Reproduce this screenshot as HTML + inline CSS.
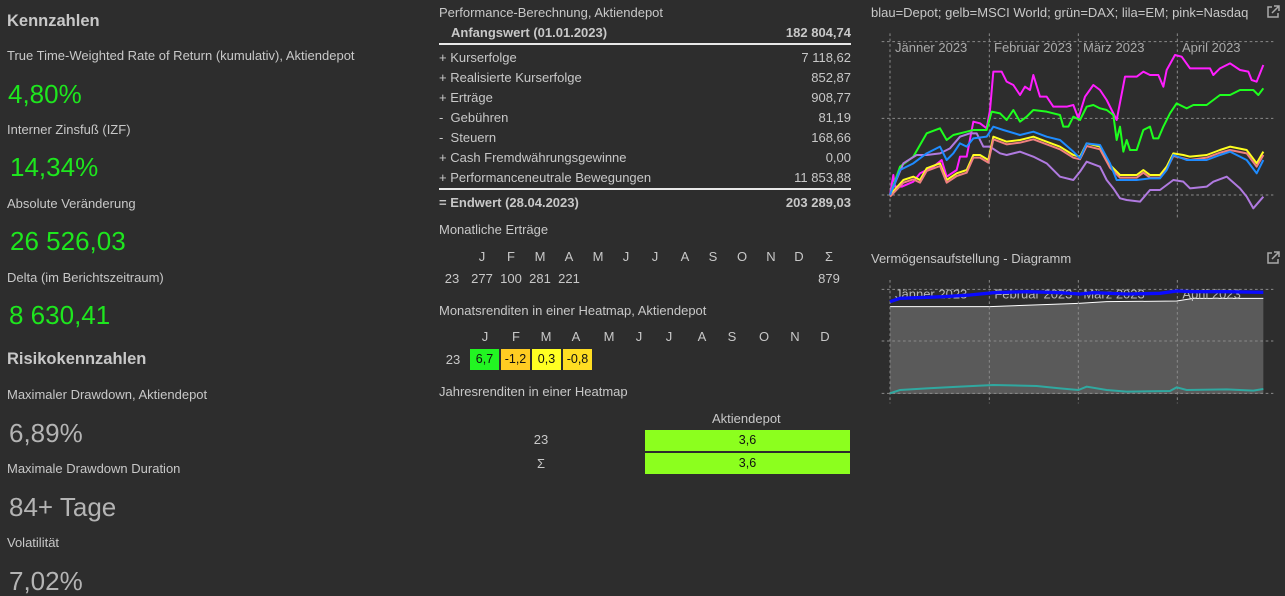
<!DOCTYPE html>
<html><head><meta charset="utf-8"><style>
body{margin:0;width:1285px;height:593px;background:#2d2d2d;overflow:hidden;position:relative;font-family:"Liberation Sans",sans-serif;color:#c8c8c8}
.a{position:absolute;white-space:nowrap;line-height:18px;font-size:13px}
.h{font-weight:bold;font-size:16.5px;line-height:20px;color:#c8c8c8}
.v{font-size:26px;line-height:30px}
.g{color:#1ee61e}
.gr{color:#b4b4b4}
.r{text-align:right}
.c{text-align:center;width:30px;margin-left:-15px}
.b{font-weight:bold}
.line{position:absolute;left:439px;width:412px;height:2px;background:#e8e8e8}
.cell{position:absolute;height:21px;line-height:21px;font-size:12.5px;color:#111;text-align:center}
.lbl{position:absolute;font-size:13px;color:#aaa;white-space:nowrap;line-height:16px}
</style></head><body>
<div class="a h" style="left:7px;top:11px">Kennzahlen</div>
<div class="a" style="left:7px;top:47px">True Time-Weighted Rate of Return (kumulativ), Aktiendepot</div>
<div class="a v g" style="left:8px;top:79px">4,80%</div>
<div class="a" style="left:7px;top:121px">Interner Zinsfuß (IZF)</div>
<div class="a v g" style="left:10px;top:152px">14,34%</div>
<div class="a" style="left:7px;top:195px">Absolute Veränderung</div>
<div class="a v g" style="left:10px;top:226px">26 526,03</div>
<div class="a" style="left:7px;top:269px">Delta (im Berichtszeitraum)</div>
<div class="a v g" style="left:9px;top:300px">8 630,41</div>
<div class="a h" style="left:7px;top:349px">Risikokennzahlen</div>
<div class="a" style="left:7px;top:386px">Maximaler Drawdown, Aktiendepot</div>
<div class="a v gr" style="left:9px;top:418px">6,89%</div>
<div class="a" style="left:7px;top:460px">Maximale Drawdown Duration</div>
<div class="a v gr" style="left:9px;top:492px">84+ Tage</div>
<div class="a" style="left:7px;top:534px">Volatilität</div>
<div class="a v gr" style="left:9px;top:566px">7,02%</div>

<div class="a" style="left:439px;top:4px">Performance-Berechnung, Aktiendepot</div>
<div class="a b" style="left:451px;top:24px">Anfangswert (01.01.2023)</div>
<div class="a b r" style="right:434px;top:24px">182 804,74</div>
<div class="line" style="top:43px"></div>
<div class="a" style="left:439px;top:49px">+ Kurserfolge</div><div class="a r" style="right:434px;top:49px">7 118,62</div>
<div class="a" style="left:439px;top:69px">+ Realisierte Kurserfolge</div><div class="a r" style="right:434px;top:69px">852,87</div>
<div class="a" style="left:439px;top:89px">+ Erträge</div><div class="a r" style="right:434px;top:89px">908,77</div>
<div class="a" style="left:439px;top:109px">-&nbsp; Gebühren</div><div class="a r" style="right:434px;top:109px">81,19</div>
<div class="a" style="left:439px;top:129px">-&nbsp; Steuern</div><div class="a r" style="right:434px;top:129px">168,66</div>
<div class="a" style="left:439px;top:149px">+ Cash Fremdwährungsgewinne</div><div class="a r" style="right:434px;top:149px">0,00</div>
<div class="a" style="left:439px;top:169px">+ Performanceneutrale Bewegungen</div><div class="a r" style="right:434px;top:169px">11 853,88</div>
<div class="line" style="top:188px"></div>
<div class="a b" style="left:439px;top:194px">= Endwert (28.04.2023)</div>
<div class="a b r" style="right:434px;top:194px">203 289,03</div>

<div class="a" style="left:439px;top:221px">Monatliche Erträge</div>
<div class="a c" style="left:482px;top:248px">J</div><div class="a c" style="left:511px;top:248px">F</div><div class="a c" style="left:540px;top:248px">M</div><div class="a c" style="left:569px;top:248px">A</div><div class="a c" style="left:598px;top:248px">M</div><div class="a c" style="left:626px;top:248px">J</div><div class="a c" style="left:655px;top:248px">J</div><div class="a c" style="left:685px;top:248px">A</div><div class="a c" style="left:713px;top:248px">S</div><div class="a c" style="left:742px;top:248px">O</div><div class="a c" style="left:771px;top:248px">N</div><div class="a c" style="left:799px;top:248px">D</div><div class="a c" style="left:829px;top:248px">Σ</div>
<div class="a c" style="left:452px;top:270px">23</div><div class="a c" style="left:482px;top:270px">277</div><div class="a c" style="left:511px;top:270px">100</div><div class="a c" style="left:540px;top:270px">281</div><div class="a c" style="left:569px;top:270px">221</div><div class="a c" style="left:829px;top:270px">879</div>

<div class="a" style="left:439px;top:302px">Monatsrenditen in einer Heatmap, Aktiendepot</div>
<div class="a c" style="left:485px;top:328px">J</div><div class="a c" style="left:516px;top:328px">F</div><div class="a c" style="left:546px;top:328px">M</div><div class="a c" style="left:576px;top:328px">A</div><div class="a c" style="left:609px;top:328px">M</div><div class="a c" style="left:639px;top:328px">J</div><div class="a c" style="left:669px;top:328px">J</div><div class="a c" style="left:702px;top:328px">A</div><div class="a c" style="left:732px;top:328px">S</div><div class="a c" style="left:764px;top:328px">O</div><div class="a c" style="left:795px;top:328px">N</div><div class="a c" style="left:825px;top:328px">D</div>
<div class="a c" style="left:453px;top:351px">23</div>
<div class="cell" style="left:470px;top:349px;width:29px;background:#22f522">6,7</div>
<div class="cell" style="left:501px;top:349px;width:29px;background:#ffcc22">-1,2</div>
<div class="cell" style="left:532px;top:349px;width:29px;background:#ffff22">0,3</div>
<div class="cell" style="left:563px;top:349px;width:29px;background:#ffdd22">-0,8</div>

<div class="a" style="left:439px;top:383px">Jahresrenditen in einer Heatmap</div>
<div class="a" style="left:712px;top:410px">Aktiendepot</div>
<div class="a c" style="left:541px;top:431px">23</div>
<div class="a c" style="left:541px;top:455px">Σ</div>
<div class="cell" style="left:645px;top:430px;width:205px;background:#8cff1e">3,6</div>
<div class="cell" style="left:645px;top:453px;width:205px;background:#8cff1e">3,6</div>

<div class="a" style="left:871px;top:4px;font-size:13px">blau=Depot; gelb=MSCI World; grün=DAX; lila=EM; pink=Nasdaq</div>
<svg style="position:absolute;left:1266px;top:5px" width="14" height="14" viewBox="0 0 14 14"><path d="M6 2H2v10h10V8" fill="none" stroke="#aaa" stroke-width="1.5"/><path d="M8 1h5v5M13 1L6 8" fill="none" stroke="#aaa" stroke-width="1.5"/></svg>
<svg style="position:absolute;left:860px;top:0" width="425" height="220" viewBox="0 0 1275 660">
<g stroke="#8a8a8a" stroke-width="3" stroke-dasharray="8,8" fill="none">
<path d="M65 125H1240M65 355H1240M65 585H1240M90 100V660M388 100V660M655 100V660M952 100V660"/></g>
<g fill="none" stroke-width="6" stroke-linejoin="round">
<polyline stroke="#ff1eff" points="90,585 100,525 105,560 125,560 160,545 180,520 220,500 245,480 260,530 290,510 300,470 320,470 340,365 360,370 380,385 390,330 400,215 425,215 440,245 460,255 480,285 495,260 510,270 520,225 540,290 560,290 580,320 620,320 640,315 655,355 675,290 700,255 720,270 740,300 770,360 795,230 830,230 850,215 870,225 895,225 910,260 920,210 945,165 965,170 990,205 1050,205 1060,225 1080,205 1110,190 1140,210 1165,215 1175,240 1190,245 1210,195"/>
<polyline stroke="#1eff1e" points="90,585 120,500 160,470 200,400 240,385 260,420 280,405 320,395 340,390 380,390 395,335 420,340 440,360 460,330 480,365 500,350 520,330 560,335 600,345 610,380 625,380 640,350 660,360 680,320 700,315 720,325 740,330 760,345 770,420 780,380 790,455 800,420 810,450 830,450 850,390 870,380 880,415 895,415 910,380 930,340 950,310 980,325 1000,315 1040,315 1080,285 1110,285 1140,270 1180,270 1195,285 1210,265"/>
<polyline stroke="#b07ae0" points="90,585 130,490 170,465 200,465 240,460 270,445 300,410 330,400 350,400 370,440 390,440 420,460 440,465 480,455 520,470 560,490 600,530 640,540 660,515 680,485 720,500 740,540 760,565 780,595 800,600 840,605 870,570 900,570 920,555 940,540 970,545 990,565 1040,560 1060,545 1100,530 1140,565 1160,590 1180,625 1210,590"/>
<polyline stroke="#ffff1e" points="90,585 130,540 160,530 180,540 200,505 240,490 260,540 290,520 320,510 340,465 360,465 385,480 400,410 440,425 480,420 520,410 560,425 600,440 640,465 660,470 680,430 720,440 750,495 780,525 830,525 850,510 870,525 900,525 920,500 940,460 970,465 990,470 1040,465 1080,450 1110,440 1160,450 1190,490 1210,455"/>
<polyline stroke="#f08080" points="90,590 130,548 160,538 180,548 200,513 240,498 260,548 290,528 320,518 340,473 360,473 385,488 400,418 440,433 480,428 520,418 560,433 600,448 640,473 660,478 680,438 720,448 750,503 780,533 830,533 850,518 870,533 900,533 920,508 940,468 970,475 990,480 1040,473 1080,458 1110,450 1160,460 1190,500 1210,465"/>
<polyline stroke="#1e8cff" points="90,585 120,510 160,490 200,460 240,440 260,480 280,460 300,430 320,440 340,415 380,410 400,380 430,390 480,405 520,395 560,410 600,420 640,455 660,475 680,430 720,435 750,490 770,540 830,540 870,535 900,535 920,510 940,465 980,480 1040,480 1080,465 1110,455 1160,480 1190,520 1210,480"/>
</g></svg>
<div class="lbl" style="left:895px;top:40px">Jänner 2023</div>
<div class="lbl" style="left:994px;top:40px">Februar 2023</div>
<div class="lbl" style="left:1083px;top:40px">März 2023</div>
<div class="lbl" style="left:1182px;top:40px">April 2023</div>

<div class="a" style="left:871px;top:250px;font-size:13px">Vermögensaufstellung - Diagramm</div>
<svg style="position:absolute;left:1266px;top:251px" width="14" height="14" viewBox="0 0 14 14"><path d="M6 2H2v10h10V8" fill="none" stroke="#aaa" stroke-width="1.5"/><path d="M8 1h5v5M13 1L6 8" fill="none" stroke="#aaa" stroke-width="1.5"/></svg>
<svg style="position:absolute;left:860px;top:240px" width="425" height="170" viewBox="0 0 1275 510">
<polygon fill="#5a5a5a" points="90,200 390,200 520,195 655,190 740,185 950,183 1000,175 1210,175 1210,462 90,462"/>
<polyline fill="none" stroke="#fff" stroke-width="3" points="90,200 390,200 520,195 655,190 740,185 950,183 1000,175 1210,175"/>
<g stroke="#8a8a8a" stroke-width="3" stroke-dasharray="8,8" fill="none">
<path d="M65 148H1240M65 303H1240M65 460H1240M90 120V490M388 120V490M655 120V490M952 120V490"/></g>
<g fill="#b8b8b8" font-family="Liberation Sans,sans-serif" font-size="39"><text x="105" y="175">Jänner 2023</text><text x="403" y="175">Februar 2023</text><text x="670" y="175">März 2023</text><text x="967" y="175">April 2023</text></g>
<polyline fill="none" stroke="#0a0aff" stroke-width="10" points="90,185 120,175 250,170 330,165 400,158 500,155 600,158 660,162 700,158 800,162 900,160 950,153 1000,155 1100,155 1210,157"/>
<polyline fill="none" stroke="#30a8a0" stroke-width="6" points="90,460 120,450 200,445 300,440 400,435 530,438 600,445 655,450 680,440 740,450 800,455 930,453 950,442 980,450 1100,448 1180,452 1210,447"/>
</svg>
</body></html>
